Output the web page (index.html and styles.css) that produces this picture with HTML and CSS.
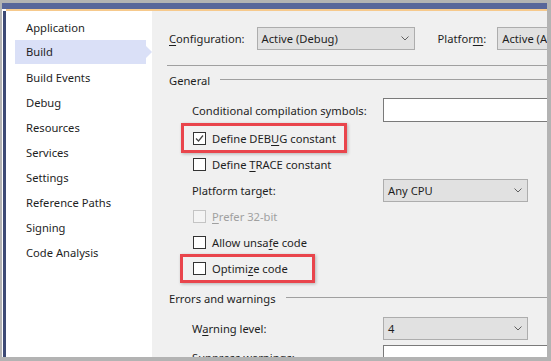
FILE: index.html
```html
<!DOCTYPE html>
<html lang="en">
<head>
  <meta charset="UTF-8" />
  <meta name="viewport" content="width=device-width, initial-scale=1.0" />
  <title>Project Properties - Build</title>
  <link rel="stylesheet" href="styles.css">
</head>
<body>
  <div class="window">
    <div class="tabline"></div>
    <div class="page">
      <ul class="nav">
        <li>Application</li>
        <li class="active">Build</li>
        <li>Build Events</li>
        <li>Debug</li>
        <li>Resources</li>
        <li>Services</li>
        <li>Settings</li>
        <li>Reference Paths</li>
        <li>Signing</li>
        <li>Code Analysis</li>
      </ul>

      <div class="main">
        <div class="toolbar">
          <span class="label"><u>C</u>onfiguration:</span>
          <div class="select config">
            <span>Active (Debug)</span>
            <svg class="chev" width="8" height="5" viewBox="0 0 8 5"><polyline points="0.5,0.5 4,4 7.5,0.5" /></svg>
          </div>
          <span class="label platform-label">Platfor<u>m</u>:</span>
          <div class="select platform">
            <span>Active (Any CPU)</span>
          </div>
        </div>

        <div class="rule"></div>

        <div class="section">General</div>
        <div class="props">
          <div class="row row-first">
            <span class="name">Conditional compilation symbols:</span>
            <div class="textbox"></div>
          </div>
          <div class="row">
            <span class="check mark mark-debug">
              <span class="box">
                <svg width="11" height="11" viewBox="0 0 11 11"><polyline points="2,5.5 4.5,8 9,2.5" /></svg>
              </span>
              <span>Define DEB<u>U</u>G constant</span>
            </span>
          </div>
          <div class="row">
            <span class="check"><span class="box"></span><span>Define <u>T</u>RACE constant</span></span>
          </div>
          <div class="row">
            <span class="name">Platform tar<u>g</u>et:</span>
            <div class="select target">
              <span>Any CPU</span>
              <svg class="chev" width="8" height="5" viewBox="0 0 8 5"><polyline points="0.5,0.5 4,4 7.5,0.5" /></svg>
            </div>
          </div>
          <div class="row">
            <span class="check disabled"><span class="box"></span><span><u>P</u>refer 32-bit</span></span>
          </div>
          <div class="row">
            <span class="check"><span class="box"></span><span>Allow unsa<u>f</u>e code</span></span>
          </div>
          <div class="row">
            <span class="check mark mark-optimize"><span class="box"></span><span>Optimi<u>z</u>e code</span></span>
          </div>
        </div>

        <div class="section section-errors">Errors and warnings</div>
        <div class="props">
          <div class="row row-warn">
            <span class="name">W<u>a</u>rning level:</span>
            <div class="select target">
              <span>4</span>
              <svg class="chev" width="8" height="5" viewBox="0 0 8 5"><polyline points="0.5,0.5 4,4 7.5,0.5" /></svg>
            </div>
          </div>
          <div class="row row-suppress">
            <span class="name">S<u>u</u>ppress warnings:</span>
            <div class="textbox"></div>
          </div>
        </div>
      </div>
    </div>
  </div>
</body>
</html>
```

FILE: styles.css
```css
body {
  margin: 0;
  height: 361px;
  overflow: hidden;
  background: #b3b3b3;
  font-family: "Segoe UI", "Noto Sans", sans-serif;
  font-size: 11.2px;
  color: #1e1e1e;
}
u {
  text-decoration-thickness: 1px;
  text-underline-offset: 2px;
}
.window {
  margin: 3px 4px 0 2px;
  height: 348px;
  background: #fff;
  border-top: 6px solid #58669a;
  display: flex;
  flex-direction: column;
  overflow: hidden;
}
.tabline {
  height: 2px;
  margin-left: 4px;
  background: #f6c98c;
}
.page {
  flex: 1;
  min-height: 0;
  display: flex;
  margin-left: 1px;
  border-left: 3px solid #3d4a75;
}

/* left navigation */
.nav {
  list-style: none;
  margin: 0;
  padding: 4px 0 0;
  width: 146px;
  flex-shrink: 0;
  background: #fff;
}
.nav li {
  position: relative;
  height: 25px;
  line-height: 25px;
  margin-left: 9px;
  width: 131px;
  padding-left: 11px;
  box-sizing: border-box;
}
.nav li.active {
  height: 24px;
  line-height: 24px;
  margin-bottom: 1px;
  background: #dae0f7;
}
.nav li.active::after {
  content: "";
  position: absolute;
  right: -6px;
  top: 6px;
  border-left: 6px solid #dae0f7;
  border-top: 6px solid transparent;
  border-bottom: 6px solid transparent;
}

/* main panel */
.main {
  flex: 1;
  min-width: 0;
  background: #f0f0f0;
  padding: 16px 0 0 17px;
  overflow: hidden;
}
.toolbar {
  display: flex;
  align-items: center;
  height: 23px;
  white-space: nowrap;
}
.label {
  margin-right: 12px;
}
.platform-label {
  margin-left: 23px;
  margin-right: 11px;
}
.select {
  flex-shrink: 0;
  height: 23px;
  box-sizing: border-box;
  border: 1px solid #adadad;
  background: #e1e1e1;
  display: flex;
  align-items: center;
  justify-content: space-between;
  padding: 0 5px 0 4px;
}
.select.config { width: 158px; }
.select.platform { width: 158px; }
.select.target { width: 145px; }
.chev polyline {
  fill: none;
  stroke: #606060;
  stroke-width: 1;
}
.rule {
  height: 1px;
  background: #a0a0a0;
  margin: 15px 0 0 -2px;
}
.section {
  display: flex;
  align-items: center;
  height: 16px;
  margin-top: 6px;
  white-space: nowrap;
}
.section::after {
  content: "";
  flex: 1;
  height: 1px;
  margin: 0 0 1px 10px;
  background: #a0a0a0;
}
.section-errors {
  margin-top: 9px;
}
.props {
  padding-left: 23px;
  margin-top: 9px;
}
.row {
  display: flex;
  align-items: center;
  height: 26px;
  white-space: nowrap;
}
.row-first {
  margin-bottom: 2px;
}
.row-warn {
  margin-top: 1px;
}
.row-suppress {
  margin-top: 3px;
}
.name {
  width: 191px;
  flex-shrink: 0;
}
.textbox {
  flex-shrink: 0;
  width: 220px;
  height: 24px;
  box-sizing: border-box;
  border: 1px solid #7a7a7a;
  background: #fff;
}

/* checkboxes */
.check {
  position: relative;
  display: inline-flex;
  align-items: center;
  margin-left: 1px;
}
.box {
  width: 13px;
  height: 13px;
  box-sizing: border-box;
  border: 1px solid #333;
  background: #fff;
  margin-right: 6px;
  display: flex;
  align-items: center;
  justify-content: center;
}
.box polyline {
  fill: none;
  stroke: #444;
  stroke-width: 1.2;
}
.check.disabled {
  color: #a0a0a0;
}
.check.disabled .box {
  border-color: #c4c4c4;
  background: #f4f4f4;
}

/* red callouts */
.mark::after {
  content: "";
  position: absolute;
  border: 3px solid #e9454c;
  box-shadow: 1px 1px 3px rgba(0, 0, 0, 0.25);
}
.mark-debug::after {
  left: -12px;
  right: -11px;
  top: -8px;
  bottom: -7px;
}
.mark-optimize::after {
  left: -13px;
  right: -27px;
  top: -7px;
  bottom: -7px;
}
```
